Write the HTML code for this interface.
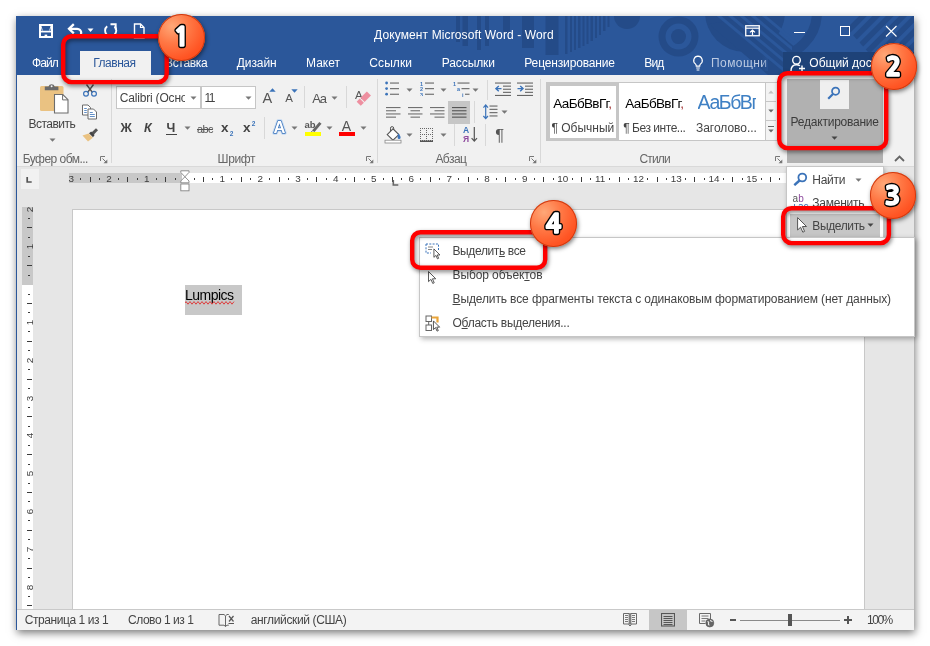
<!DOCTYPE html>
<html lang="ru">
<head>
<meta charset="utf-8">
<title>Документ Microsoft Word - Word</title>
<style>
html,body{margin:0;padding:0;}
body{width:930px;height:646px;position:relative;overflow:hidden;background:#fff;font-family:"Liberation Sans",sans-serif;font-size:12px;}
#all{position:absolute;left:0;top:0;width:930px;height:646px;will-change:transform;}
.r{position:absolute;display:block;}
.t{position:absolute;white-space:pre;line-height:1;display:block;}
.badge{border-radius:50%;background:radial-gradient(circle at 30% 26%,#ffa878 0%,#ff7845 36%,#ff5524 70%,#fb4310 100%);box-shadow:0 0 0 1px #cf3a10 inset,1px 2px 4px rgba(0,0,0,.5);}
u{text-decoration:underline;text-underline-offset:1px;}
</style>
</head>
<body>
<div id="all">
<!-- window -->
<div class="r" style="left:16px;top:16px;width:898px;height:614px;background:#e6e6e6;box-shadow:1px 3px 8px rgba(0,0,0,.52);"></div>
<div class="r" style="left:16px;top:16px;width:898px;height:59px;background:#2b579a;"></div>
<svg class="r" style="left:16px;top:16px;" width="898" height="59" viewBox="0 0 898 59"><g fill="#244b88"><rect x="440" y="0" width="4" height="26"/><rect x="446.5" y="0" width="5.5" height="30"/><rect x="461" y="0" width="4" height="34"/><rect x="469" y="0" width="4" height="30"/><rect x="487" y="0" width="7" height="17"/><rect x="506" y="0" width="12" height="32"/><rect x="529.5" y="0" width="13" height="39"/><rect x="549" y="0" width="2.5" height="38"/><rect x="554" y="0" width="2" height="36"/><rect x="558" y="0" width="2" height="34"/><rect x="562" y="0" width="2.5" height="32"/><rect x="566.5" y="0" width="2" height="30"/><rect x="570.5" y="0" width="2" height="28"/><rect x="574.5" y="0" width="2.5" height="25"/><rect x="579" y="0" width="2" height="22"/><rect x="583" y="0" width="2" height="19"/><rect x="587" y="0" width="2.5" height="15"/><rect x="591.5" y="0" width="2" height="11"/><circle cx="611" cy="0" r="13"/><path d="M662.5 0.6 m-20 20 a20 20 0 1 0 40 0 a20 20 0 1 0 -40 0 M662.5 20.6 m-13 0 a13 13 0 1 1 26 0 a13 13 0 1 1 -26 0" fill-rule="evenodd"/><circle cx="662.5" cy="20.6" r="7.5"/><circle cx="729" cy="-4" r="40"/><path d="M693 8 L752 59 L806 59 L806 54 L742 0 Z"/></g><g stroke="#2b579a" stroke-width="3"><path d="M697.0 -5L787.0 70"/><path d="M708.3 -5L798.3 70"/><path d="M719.6 -5L809.6 70"/><path d="M730.9 -5L820.9 70"/><path d="M742.2 -5L832.2 70"/></g><clipPath id="cpA"><path d="M776 0H898V59H776Z"/></clipPath><circle cx="756" cy="-4" r="45" fill="none" stroke="#244b88" stroke-width="10" clip-path="url(#cpA)"/><clipPath id="cpR"><path d="M820 0H898V36H852Z"/></clipPath><g clip-path="url(#cpR)" stroke="#244b88" stroke-width="5.5"><path d="M797.0 50L857.0 -10"/><path d="M810.4 50L870.4 -10"/><path d="M823.8 50L883.8 -10"/><path d="M837.2 50L897.2 -10"/><path d="M850.6 50L910.6 -10"/><path d="M864.0 50L924.0 -10"/><path d="M877.4 50L937.4 -10"/><path d="M890.8 50L950.8 -10"/><path d="M904.2 50L964.2 -10"/><path d="M917.6 50L977.6 -10"/></g></svg>
<div class="r" style="left:16px;top:75px;width:1px;height:555px;background:#2b579a;"></div>
<svg class="r" style="left:38px;top:23px;" width="16" height="16" viewBox="0 0 16 16"><path d="M2 2h12v12h-12z" fill="none" stroke="#fff" stroke-width="2"/><path d="M2 8.600h12" stroke="#fff" stroke-width="1.700"/><path d="M3 3l1.300 4.500M13 3l-1.300 4.500" stroke="#fff" stroke-width="0.900"/><rect x="6.600" y="11.600" width="2.600" height="3" fill="#fff"/></svg>
<svg class="r" style="left:67px;top:22px;" width="18" height="17" viewBox="0 0 18 17"><path d="M2.500 6.800h7.700a4 4 0 0 1 0 8H8.500" fill="none" stroke="#fff" stroke-width="2.300"/><path d="M6.800 2.200L2 6.800l4.800 4.600" fill="none" stroke="#fff" stroke-width="2.300"/></svg>
<svg class="r" style="left:87px;top:28px;" width="7" height="5" viewBox="0 0 7 5"><path d="M0.5 0.5h6L3.5 4z" fill="#fff"/></svg>
<svg class="r" style="left:102px;top:22px;" width="17" height="17" viewBox="0 0 17 17"><path d="M5.2 4.2 A5.6 5.6 0 1 0 12.5 4.5" fill="none" stroke="#fff" stroke-width="1.9"/><path d="M8.5 2.2h5.2v5.2" fill="none" stroke="#fff" stroke-width="1.9"/></svg>
<svg class="r" style="left:133px;top:23px;" width="12" height="16" viewBox="0 0 12 16"><path d="M1.5 1h6l3.5 3.5V15h-9.5z" fill="none" stroke="#fff" stroke-width="1.4"/><path d="M7.5 1v3.5H11" fill="none" stroke="#fff" stroke-width="1.2"/></svg>
<span class="t" style='left:374.0px;top:28.8px;font-size:12px;color:#fff;letter-spacing:0.12px;'>Документ Microsoft Word - Word</span>
<svg class="r" style="left:745px;top:25px;" width="15" height="12" viewBox="0 0 15 12"><rect x="0.75" y="0.75" width="13.5" height="10" fill="none" stroke="#fff" stroke-width="1.3"/><path d="M0.75 3.2h13.5" stroke="#fff" stroke-width="1.2"/><path d="M7.5 10V5.2M5 7.4l2.5-2.4 2.5 2.4" fill="none" stroke="#fff" stroke-width="1.2"/></svg>
<div class="r" style="left:794px;top:32px;width:11px;height:1px;background:#fff;"></div>
<div class="r" style="left:840px;top:26px;width:10px;height:10px;background:transparent;border:1px solid #fff;box-sizing:border-box;"></div>
<svg class="r" style="left:885px;top:25px;" width="13" height="13" viewBox="0 0 13 13"><path d="M1 1l10.5 10.5M11.5 1L1 11.5" stroke="#fff" stroke-width="1.1"/></svg>
<!-- tabs -->
<span class="t" style='left:32.0px;top:56.8px;font-size:12px;color:#fff;letter-spacing:-0.94px;'>Файл</span>
<div class="r" style="left:80px;top:51px;width:71px;height:24px;background:#f1f1f1;"></div>
<span class="t" style='left:93.3px;top:56.8px;font-size:12px;color:#2b579a;letter-spacing:-0.50px;'>Главная</span>
<span class="t" style='left:165.0px;top:56.8px;font-size:12px;color:#fff;letter-spacing:-0.32px;'>Вставка</span>
<span class="t" style='left:236.7px;top:56.8px;font-size:12px;color:#fff;letter-spacing:-0.07px;'>Дизайн</span>
<span class="t" style='left:306.0px;top:56.8px;font-size:12px;color:#fff;letter-spacing:0.01px;'>Макет</span>
<span class="t" style='left:369.3px;top:56.8px;font-size:12px;color:#fff;letter-spacing:0.09px;'>Ссылки</span>
<span class="t" style='left:441.7px;top:56.8px;font-size:12px;color:#fff;letter-spacing:-0.08px;'>Рассылки</span>
<span class="t" style='left:524.3px;top:56.8px;font-size:12px;color:#fff;letter-spacing:-0.15px;'>Рецензирование</span>
<span class="t" style='left:644.3px;top:56.8px;font-size:12px;color:#fff;letter-spacing:-0.86px;'>Вид</span>
<svg class="r" style="left:692px;top:55px;" width="12" height="17" viewBox="0 0 12 17"><path d="M6 1.2a4.3 4.3 0 0 0-2.6 7.7c.6.6.9 1.3.9 2.3h3.4c0-1 .3-1.7.9-2.3A4.3 4.3 0 0 0 6 1.2z" fill="none" stroke="#fff" stroke-width="1.2"/><path d="M4.2 13h3.6M4.6 15h2.8" stroke="#fff" stroke-width="1.1"/></svg>
<span class="t" style='left:711.0px;top:56.8px;font-size:12px;color:#bccae2;letter-spacing:0.43px;width:56.2px;overflow:hidden;'>Помощник</span>
<div class="r" style="left:762px;top:55px;width:6px;height:16px;background:linear-gradient(90deg,rgba(43,87,154,0),rgba(43,87,154,.55));"></div>
<div class="r" style="left:783px;top:52px;width:131px;height:23px;background:#1e4278;"></div>
<svg class="r" style="left:790px;top:55px;" width="16" height="17" viewBox="0 0 16 17"><circle cx="6.5" cy="5.2" r="3.8" fill="none" stroke="#fff" stroke-width="1.4"/><path d="M1 16c0-4 2-6.3 5.5-6.3 1.4 0 2.5.4 3.4 1.1" fill="none" stroke="#fff" stroke-width="1.4"/><path d="M12 10.5v6M9 13.5h6" stroke="#fff" stroke-width="1.4"/></svg>
<span class="t" style='left:809.3px;top:56.8px;font-size:12px;color:#fff;width:104px;overflow:hidden;'>Общий доступ</span>
<!-- ribbon -->
<div class="r" style="left:17px;top:75px;width:897px;height:92px;background:#f1f1f1;"></div>
<div class="r" style="left:17px;top:166px;width:897px;height:1px;background:#d9d9d9;"></div>
<!-- clipboard group -->
<svg class="r" style="left:39px;top:82px;" width="31" height="32" viewBox="0 0 31 32"><rect x="1" y="4" width="23.5" height="25" rx="1.5" fill="#eac282"/><path d="M5.800 8.300V4.600h3.700a3.200 3.200 0 0 1 6.200 0h3.700v3.700z" fill="#6a6a6a"/><circle cx="12.600" cy="4.300" r="1" fill="#f3f3f3"/><path d="M15.5 12.5h8.3l5.2 5.2V31h-13.5z" fill="#fff" stroke="#6d6d6d" stroke-width="1.1"/><path d="M23.6 12.7v5.2H29" fill="none" stroke="#6d6d6d" stroke-width="1"/></svg>
<span class="t" style='left:28.6px;top:117.8px;font-size:12px;color:#444444;letter-spacing:-0.53px;'>Вставить</span>
<svg class="r" style="left:48.9px;top:137.8px;" width="7" height="4" viewBox="0 0 7 4"><path d="M0.5 0.5h6L3.5 3.7z" fill="#777"/></svg>
<svg class="r" style="left:82px;top:84px;" width="16" height="13" viewBox="0 0 16 13"><path d="M4.5 0.5L10.5 8.5M11.5 0.5L5.5 8.5" stroke="#555" stroke-width="1.4" fill="none"/><circle cx="4" cy="9.8" r="2.4" fill="none" stroke="#3b73b9" stroke-width="1.2"/><circle cx="12" cy="9.8" r="2.4" fill="none" stroke="#3b73b9" stroke-width="1.2"/></svg>
<svg class="r" style="left:81px;top:104px;" width="17" height="16" viewBox="0 0 17 16"><path d="M1.500 1h5.500l2.500 2.500V11h-8z" fill="#fff" stroke="#6a6a6a" stroke-width="1"/><path d="M3.200 4.500h2.600M3.200 6.500h2.600M3.200 8.500h2.600" stroke="#3b73b9" stroke-width="0.800"/><path d="M7 5h5.500l3 3V15H7z" fill="#fff" stroke="#6a6a6a" stroke-width="1"/><path d="M8.800 8.500h3M8.800 10.500h5M8.800 12.500h5" stroke="#3b73b9" stroke-width="0.800"/></svg>
<svg class="r" style="left:81px;top:127px;" width="18" height="15" viewBox="0 0 18 15"><path d="M10.5 5.5L15 1.2l2 2-4.3 4.5z" fill="#555"/><path d="M8 6.2l2.2-1.6 3.4 3.4-1.6 2.2z" fill="#444"/><path d="M7.6 6.6l4.2 4.2L7 14.5 1.5 8.4z" fill="#eac282"/></svg>
<span class="t" style='left:22.7px;top:153.1px;font-size:12px;color:#666;letter-spacing:-0.53px;'>Буфер обм...</span>
<svg class="r" style="left:100px;top:156px;" width="8" height="8" viewBox="0 0 8 8"><path d="M0.5 5V0.5H5" fill="none" stroke="#777" stroke-width="1"/><path d="M2.5 2.5L6.5 6.5" stroke="#777" stroke-width="1"/><path d="M7.3 3.5v3.8H3.5z" fill="#777"/></svg>
<div class="r" style="left:111px;top:79px;width:1px;height:84px;background:#d8d8d8;"></div>
<!-- font group -->
<div class="r" style="left:116px;top:86px;width:85px;height:23px;background:#fff;border:1px solid #c6c6c6;box-sizing:border-box;"></div>
<span class="t" style='left:119.8px;top:91.6px;font-size:12px;color:#444444;letter-spacing:-0.19px;width:65.5px;overflow:hidden;'>Calibri (Основной текст)</span>
<svg class="r" style="left:190.0px;top:95.8px;" width="7" height="4" viewBox="0 0 7 4"><path d="M0.5 0.5h6L3.5 3.7z" fill="#777"/></svg>
<div class="r" style="left:201px;top:86px;width:55px;height:23px;background:#fff;border:1px solid #c6c6c6;box-sizing:border-box;"></div>
<span class="t" style='left:204.5px;top:91.6px;font-size:12px;color:#444444;letter-spacing:-1.47px;'>11</span>
<svg class="r" style="left:244.8px;top:95.8px;" width="7" height="4" viewBox="0 0 7 4"><path d="M0.5 0.5h6L3.5 3.7z" fill="#777"/></svg>
<span class="t" style='left:262.6px;top:90.7px;font-size:14.5px;color:#555;'>A</span>
<svg class="r" style="left:269px;top:88px;" width="7" height="4" viewBox="0 0 7 4"><path d="M0.3 3.8L3.5 0.3 6.7 3.8z" fill="#3b73b9"/></svg>
<span class="t" style='left:285.3px;top:93.3px;font-size:11.5px;color:#555;'>A</span>
<svg class="r" style="left:291px;top:89px;" width="7" height="4" viewBox="0 0 7 4"><path d="M0.3 0.2h6.4L3.5 3.7z" fill="#3b73b9"/></svg>
<div class="r" style="left:304px;top:86px;width:1px;height:22px;background:#d8d8d8;"></div>
<span class="t" style='left:312.3px;top:92.0px;font-size:13px;color:#555;letter-spacing:-1.21px;'>Aa</span>
<svg class="r" style="left:331.0px;top:95.8px;" width="7" height="4" viewBox="0 0 7 4"><path d="M0.5 0.5h6L3.5 3.7z" fill="#777"/></svg>
<div class="r" style="left:346px;top:86px;width:1px;height:22px;background:#d8d8d8;"></div>
<svg class="r" style="left:354px;top:88px;" width="18" height="18" viewBox="0 0 18 18"><text x="1" y="10.800" font-family="Liberation Sans, sans-serif" font-size="11.500" fill="#555">A</text><g transform="translate(9.800,10.600) rotate(-45)" fill="#ee8fa0"><rect x="-7.200" y="-2.900" width="4.400" height="5.800"/><rect x="-1.800" y="-2.900" width="9" height="5.800"/></g></svg>
<span class="t" style='left:120.5px;top:122.2px;font-size:12.5px;color:#444;font-weight:700;'>Ж</span>
<span class="t" style='left:144.0px;top:122.2px;font-size:12.5px;color:#444;font-weight:700;font-style:italic;'>К</span>
<span class="t" style='left:166.5px;top:122.2px;font-size:12.5px;color:#444;font-weight:700;'>Ч</span>
<div class="r" style="left:166px;top:133.6px;width:10.5px;height:1px;background:#444;"></div>
<svg class="r" style="left:184.0px;top:126.2px;" width="7" height="4" viewBox="0 0 7 4"><path d="M0.5 0.5h6L3.5 3.7z" fill="#777"/></svg>
<span class="t" style='left:197.0px;top:123.5px;font-size:11px;color:#555;letter-spacing:-0.62px;text-decoration:line-through;'>abc</span>
<span class="t" style='left:221.0px;top:121.4px;font-size:13.5px;color:#444;font-weight:700;'>x</span>
<span class="t" style='left:229.8px;top:130.7px;font-size:6.5px;color:#3b73b9;font-weight:700;'>2</span>
<span class="t" style='left:243.0px;top:121.4px;font-size:13.5px;color:#444;font-weight:700;'>x</span>
<span class="t" style='left:251.8px;top:121.1px;font-size:6.5px;color:#3b73b9;font-weight:700;'>2</span>
<div class="r" style="left:264px;top:117px;width:1px;height:22px;background:#d8d8d8;"></div>
<svg class="r" style="left:270px;top:117px;" width="20" height="20" viewBox="0 0 20 20"><text x="3.600" y="16.400" font-family="Liberation Sans, sans-serif" font-size="16.500" font-weight="700" fill="#fff" stroke="#c3d9f2" stroke-width="3.400" stroke-linejoin="round">A</text><text x="3.600" y="16.400" font-family="Liberation Sans, sans-serif" font-size="16.500" font-weight="700" fill="#fff" stroke="#3b73b9" stroke-width="1.500" stroke-linejoin="round" paint-order="stroke">A</text></svg>
<svg class="r" style="left:291.0px;top:126.2px;" width="7" height="4" viewBox="0 0 7 4"><path d="M0.5 0.5h6L3.5 3.7z" fill="#777"/></svg>
<svg class="r" style="left:304px;top:119px;" width="19" height="18" viewBox="0 0 19 18"><text x="0.5" y="9" font-family="Liberation Sans, sans-serif" font-size="9.5" font-weight="700" fill="#555">ab</text><path d="M8 11.5L15.3 3l2.2 1.8L10.5 13z" fill="#666"/><path d="M7.3 12l2.6 1.6-3.6 1z" fill="#666"/><rect x="1" y="13" width="16" height="4" fill="#ffff00"/></svg>
<svg class="r" style="left:326.0px;top:126.2px;" width="7" height="4" viewBox="0 0 7 4"><path d="M0.5 0.5h6L3.5 3.7z" fill="#777"/></svg>
<span class="t" style='left:341.7px;top:119.1px;font-size:14px;color:#555;'>A</span>
<div class="r" style="left:339px;top:132px;width:16px;height:4px;background:#f00;"></div>
<svg class="r" style="left:360.0px;top:126.2px;" width="7" height="4" viewBox="0 0 7 4"><path d="M0.5 0.5h6L3.5 3.7z" fill="#777"/></svg>
<span class="t" style='left:217.6px;top:153.1px;font-size:12px;color:#666;letter-spacing:-0.40px;'>Шрифт</span>
<svg class="r" style="left:366px;top:156px;" width="8" height="8" viewBox="0 0 8 8"><path d="M0.5 5V0.5H5" fill="none" stroke="#777" stroke-width="1"/><path d="M2.5 2.5L6.5 6.5" stroke="#777" stroke-width="1"/><path d="M7.3 3.5v3.8H3.5z" fill="#777"/></svg>
<div class="r" style="left:377px;top:79px;width:1px;height:84px;background:#d8d8d8;"></div>
<!-- paragraph group -->
<svg class="r" style="left:385px;top:81px;" width="15" height="15" viewBox="0 0 15 15"><circle cx="1.6" cy="2.0" r="1.4" fill="#3b73b9"/><rect x="5" y="1.5" width="9" height="1.1" fill="#666"/><circle cx="1.6" cy="7.6" r="1.4" fill="#3b73b9"/><rect x="5" y="7.1" width="9" height="1.1" fill="#666"/><circle cx="1.6" cy="13.2" r="1.4" fill="#3b73b9"/><rect x="5" y="12.7" width="9" height="1.1" fill="#666"/></svg>
<svg class="r" style="left:406.0px;top:87.8px;" width="7" height="4" viewBox="0 0 7 4"><path d="M0.5 0.5h6L3.5 3.7z" fill="#777"/></svg>
<svg class="r" style="left:419.5px;top:81px;" width="15" height="15" viewBox="0 0 15 15"><text x="0" y="4.6" font-family="Liberation Sans, sans-serif" font-size="5.5" font-weight="700" fill="#3b73b9">1</text><rect x="5" y="1.5" width="9" height="1.1" fill="#666"/><text x="0" y="10.2" font-family="Liberation Sans, sans-serif" font-size="5.5" font-weight="700" fill="#3b73b9">2</text><rect x="5" y="7.1" width="9" height="1.1" fill="#666"/><text x="0" y="15.8" font-family="Liberation Sans, sans-serif" font-size="5.5" font-weight="700" fill="#3b73b9">3</text><rect x="5" y="12.7" width="9" height="1.1" fill="#666"/></svg>
<svg class="r" style="left:440.0px;top:87.8px;" width="7" height="4" viewBox="0 0 7 4"><path d="M0.5 0.5h6L3.5 3.7z" fill="#777"/></svg>
<svg class="r" style="left:452.5px;top:81px;" width="17" height="16" viewBox="0 0 17 16"><text x="0" y="4.6" font-family="Liberation Sans, sans-serif" font-size="5.5" font-weight="700" fill="#3b73b9">1</text><rect x="4.5" y="1.5" width="12" height="1.1" fill="#666"/><text x="4" y="10.2" font-family="Liberation Sans, sans-serif" font-size="5.5" font-weight="700" fill="#3b73b9">a</text><rect x="8.5" y="7.1" width="8" height="1.1" fill="#666"/><text x="9" y="15.8" font-family="Liberation Sans, sans-serif" font-size="5.5" font-weight="700" fill="#3b73b9">i</text><rect x="12" y="12.7" width="4.5" height="1.1" fill="#666"/></svg>
<svg class="r" style="left:472.0px;top:87.8px;" width="7" height="4" viewBox="0 0 7 4"><path d="M0.5 0.5h6L3.5 3.7z" fill="#777"/></svg>
<div class="r" style="left:487px;top:80px;width:1px;height:20px;background:#d8d8d8;"></div>
<svg class="r" style="left:495px;top:82px;" width="17" height="14" viewBox="0 0 17 14"><rect x="0" y="0.5" width="16" height="1.1" fill="#666"/><rect x="8" y="3.6" width="8" height="1.1" fill="#666"/><rect x="8" y="6.7" width="8" height="1.1" fill="#666"/><rect x="8" y="9.8" width="8" height="1.1" fill="#666"/><rect x="0" y="12.9" width="16" height="1.1" fill="#666"/><path d="M6.5 6.6H1.5M3.8 4L1 6.6l2.8 2.6" fill="none" stroke="#3b73b9" stroke-width="1.4"/></svg>
<svg class="r" style="left:517px;top:82px;" width="17" height="14" viewBox="0 0 17 14"><rect x="0" y="0.5" width="16" height="1.1" fill="#666"/><rect x="8" y="3.6" width="8" height="1.1" fill="#666"/><rect x="8" y="6.7" width="8" height="1.1" fill="#666"/><rect x="8" y="9.8" width="8" height="1.1" fill="#666"/><rect x="0" y="12.9" width="16" height="1.1" fill="#666"/><path d="M0.5 6.6h5M3.2 4L6 6.6 3.2 9.2" fill="none" stroke="#3b73b9" stroke-width="1.4"/></svg>
<svg class="r" style="left:385.5px;top:106.5px;" width="15" height="11" viewBox="0 0 15 11"><rect x="0" y="0.0" width="14.5" height="1.1" fill="#707070"/><rect x="0" y="3.2" width="10" height="1.1" fill="#707070"/><rect x="0" y="6.4" width="14.5" height="1.1" fill="#707070"/><rect x="0" y="9.6" width="10" height="1.1" fill="#707070"/></svg>
<svg class="r" style="left:408px;top:106.5px;" width="15" height="11" viewBox="0 0 15 11"><rect x="0" y="0.0" width="14.5" height="1.1" fill="#707070"/><rect x="2.5" y="3.2" width="9.5" height="1.1" fill="#707070"/><rect x="0" y="6.4" width="14.5" height="1.1" fill="#707070"/><rect x="2.5" y="9.6" width="9.5" height="1.1" fill="#707070"/></svg>
<svg class="r" style="left:430px;top:106.5px;" width="15" height="11" viewBox="0 0 15 11"><rect x="0" y="0.0" width="14.5" height="1.1" fill="#707070"/><rect x="4.5" y="3.2" width="10" height="1.1" fill="#707070"/><rect x="0" y="6.4" width="14.5" height="1.1" fill="#707070"/><rect x="4.5" y="9.6" width="10" height="1.1" fill="#707070"/></svg>
<div class="r" style="left:448px;top:101px;width:22px;height:23px;background:#c6c6c6;"></div>
<svg class="r" style="left:452px;top:106.5px;" width="15" height="11" viewBox="0 0 15 11"><rect x="0" y="0.0" width="14.5" height="1.1" fill="#555"/><rect x="0" y="3.2" width="14.5" height="1.1" fill="#555"/><rect x="0" y="6.4" width="14.5" height="1.1" fill="#555"/><rect x="0" y="9.6" width="14.5" height="1.1" fill="#555"/></svg>
<div class="r" style="left:474px;top:101px;width:1px;height:22px;background:#d8d8d8;"></div>
<svg class="r" style="left:483px;top:104px;" width="15" height="16" viewBox="0 0 15 16"><rect x="6.5" y="1.5" width="8" height="1.1" fill="#666"/><rect x="6.5" y="4.8" width="8" height="1.1" fill="#666"/><rect x="6.5" y="8.1" width="8" height="1.1" fill="#666"/><rect x="6.5" y="11.4" width="8" height="1.1" fill="#666"/><path d="M2.7 1v13.5M0.4 3.6L2.7 1 5 3.6M0.4 12L2.7 14.6 5 12" fill="none" stroke="#3b73b9" stroke-width="1.2"/></svg>
<svg class="r" style="left:501.0px;top:110.2px;" width="7" height="4" viewBox="0 0 7 4"><path d="M0.5 0.5h6L3.5 3.7z" fill="#777"/></svg>
<svg class="r" style="left:384px;top:126px;" width="19" height="18" viewBox="0 0 19 18"><path d="M3.2 8.6L9 2.8l5.8 5.8L9 14.2z" fill="#fff" stroke="#555" stroke-width="1.1"/><path d="M6.5 5.5V2.2a1.6 1.6 0 0 1 3.2 0V4" fill="none" stroke="#555" stroke-width="1"/><path d="M14 7.2c1.8 1.6 2.6 3 2.6 4.2a1.5 1.5 0 0 1-3 0c0-1 .3-2 .4-4.2z" fill="#3b73b9"/><rect x="1" y="14.2" width="16" height="2.8" fill="#fff" stroke="#888" stroke-width="0.8"/></svg>
<svg class="r" style="left:406.0px;top:133.2px;" width="7" height="4" viewBox="0 0 7 4"><path d="M0.5 0.5h6L3.5 3.7z" fill="#777"/></svg>
<svg class="r" style="left:420px;top:128px;" width="14" height="14" viewBox="0 0 14 14"><path d="M0 0.5H13" stroke="#666" stroke-width="1" stroke-dasharray="1 1"/><path d="M0.5 0V13" stroke="#666" stroke-width="1" stroke-dasharray="1 1"/><path d="M0 6.5H13" stroke="#666" stroke-width="1" stroke-dasharray="1 1"/><path d="M6.5 0V13" stroke="#666" stroke-width="1" stroke-dasharray="1 1"/><path d="M0 12.5H13" stroke="#666" stroke-width="1" stroke-dasharray="1 1"/><path d="M12.5 0V13" stroke="#666" stroke-width="1" stroke-dasharray="1 1"/><rect x="0" y="12.500" width="13" height="1.500" fill="#555"/></svg>
<svg class="r" style="left:440.0px;top:133.2px;" width="7" height="4" viewBox="0 0 7 4"><path d="M0.5 0.5h6L3.5 3.7z" fill="#777"/></svg>
<div class="r" style="left:454px;top:124px;width:1px;height:22px;background:#d8d8d8;"></div>
<svg class="r" style="left:463px;top:126px;" width="16" height="18" viewBox="0 0 16 18"><text x="0" y="7.4" font-family="Liberation Sans, sans-serif" font-size="8.5" font-weight="700" fill="#3b73b9">A</text><text x="0" y="16" font-family="Liberation Sans, sans-serif" font-size="8.5" font-weight="700" fill="#8e4a9e">Я</text><path d="M11.3 1v14M8.6 12.2l2.7 3 2.7-3" fill="none" stroke="#555" stroke-width="1.2"/></svg>
<div class="r" style="left:485px;top:124px;width:1px;height:22px;background:#d8d8d8;"></div>
<span class="t" style='left:495.2px;top:126.5px;font-size:16.5px;color:#555;'>¶</span>
<span class="t" style='left:435.4px;top:153.1px;font-size:12px;color:#666;letter-spacing:-0.54px;'>Абзац</span>
<svg class="r" style="left:529px;top:156px;" width="8" height="8" viewBox="0 0 8 8"><path d="M0.5 5V0.5H5" fill="none" stroke="#777" stroke-width="1"/><path d="M2.5 2.5L6.5 6.5" stroke="#777" stroke-width="1"/><path d="M7.3 3.5v3.8H3.5z" fill="#777"/></svg>
<div class="r" style="left:540px;top:79px;width:1px;height:84px;background:#d8d8d8;"></div>
<!-- styles group -->
<div class="r" style="left:546px;top:82px;width:231px;height:59px;background:#fff;border:1px solid #c6c6c6;box-sizing:border-box;"></div>
<div class="r" style="left:547px;top:83px;width:72px;height:58px;background:#fff;border:3px solid #c6c6c6;box-sizing:border-box;"></div>
<span class="t" style='left:553.3px;top:97.0px;font-size:13.5px;color:#000;letter-spacing:-0.64px;'>АаБбВвГг<span style="color:#a03030">,</span></span>
<span class="t" style='left:551.4px;top:121.5px;font-size:12px;color:#444444;letter-spacing:0.01px;'>¶ Обычный</span>
<span class="t" style='left:625.3px;top:97.0px;font-size:13.5px;color:#000;letter-spacing:-0.64px;'>АаБбВвГг<span style="color:#a03030">,</span></span>
<span class="t" style='left:623.2px;top:121.5px;font-size:12px;color:#444444;letter-spacing:-0.46px;'>¶ Без инте...</span>
<span class="t" style='left:697.6px;top:93.0px;font-size:19.5px;color:#3f80c4;letter-spacing:-1.44px;width:58.6px;overflow:hidden;'>АаБбВг</span>
<span class="t" style='left:696.0px;top:121.5px;font-size:12px;color:#444444;letter-spacing:-0.03px;'>Заголово...</span>
<div class="r" style="left:765px;top:83px;width:11px;height:57px;background:#f3f3f3;border-left:1px solid #c6c6c6;"></div>
<div class="r" style="left:765px;top:101px;width:11px;height:1px;background:#c6c6c6;"></div>
<div class="r" style="left:765px;top:120px;width:11px;height:1px;background:#c6c6c6;"></div>
<svg class="r" style="left:768px;top:90px;" width="6" height="4" viewBox="0 0 6 4"><path d="M0.3 3.6L3 0.4 5.7 3.6z" fill="#c0c0c0"/></svg>
<svg class="r" style="left:768px;top:109px;" width="6" height="4" viewBox="0 0 6 4"><path d="M0.3 0.4h5.4L3 3.6z" fill="#666"/></svg>
<svg class="r" style="left:768px;top:126px;" width="6" height="8" viewBox="0 0 6 8"><path d="M0 0.5h6" stroke="#666" stroke-width="1"/><path d="M0.3 3.4h5.4L3 6.6z" fill="#666"/></svg>
<span class="t" style='left:639.4px;top:153.1px;font-size:12px;color:#666;letter-spacing:-0.82px;'>Стили</span>
<svg class="r" style="left:775px;top:156px;" width="8" height="8" viewBox="0 0 8 8"><path d="M0.5 5V0.5H5" fill="none" stroke="#777" stroke-width="1"/><path d="M2.5 2.5L6.5 6.5" stroke="#777" stroke-width="1"/><path d="M7.3 3.5v3.8H3.5z" fill="#777"/></svg>
<!-- editing group -->
<div class="r" style="left:786.5px;top:79px;width:96px;height:83.5px;background:#b1b1b1;"></div>
<div class="r" style="left:819.5px;top:79.5px;width:29px;height:29px;background:#efefef;"></div>
<svg class="r" style="left:827px;top:86px;" width="14" height="14" viewBox="0 0 14 14"><circle cx="8.6" cy="5.2" r="3.6" fill="none" stroke="#3b73b9" stroke-width="1.7"/><path d="M6 8L1.2 12.8" stroke="#3b73b9" stroke-width="2.2"/></svg>
<span class="t" style='left:790.6px;top:116.2px;font-size:12px;color:#3b3b3b;letter-spacing:-0.23px;'>Редактирование</span>
<svg class="r" style="left:830.5px;top:135.6px;" width="7" height="4" viewBox="0 0 7 4"><path d="M0.5 0.5h6L3.5 3.7z" fill="#444"/></svg>
<svg class="r" style="left:894px;top:155px;" width="11" height="7" viewBox="0 0 11 7"><path d="M1 6L5.5 1.5 10 6" fill="none" stroke="#666" stroke-width="1.8"/></svg>
<!-- rulers and page -->
<div class="r" style="left:21px;top:169px;width:18px;height:20px;background:#f1f1f1;"></div>
<svg class="r" style="left:26px;top:176px;" width="7" height="8" viewBox="0 0 7 8"><path d="M1.200 1V6H5.700" fill="none" stroke="#555" stroke-width="1.700"/></svg>
<div class="r" style="left:69px;top:173px;width:113px;height:10px;background:#c8c8c8;"></div>
<div class="r" style="left:182px;top:173px;width:604px;height:10px;background:#fff;"></div>
<span class="t" style='left:68.5px;top:173.6px;font-size:9.9px;color:#3c3c3c;'>3</span>
<span class="t" style='left:106.2px;top:173.6px;font-size:9.9px;color:#3c3c3c;'>2</span>
<span class="t" style='left:144.1px;top:173.6px;font-size:9.9px;color:#3c3c3c;'>1</span>
<span class="t" style='left:219.6px;top:173.6px;font-size:9.9px;color:#3c3c3c;'>1</span>
<span class="t" style='left:257.4px;top:173.6px;font-size:9.9px;color:#3c3c3c;'>2</span>
<span class="t" style='left:295.2px;top:173.6px;font-size:9.9px;color:#3c3c3c;'>3</span>
<span class="t" style='left:333.0px;top:173.6px;font-size:9.9px;color:#3c3c3c;'>4</span>
<span class="t" style='left:370.9px;top:173.6px;font-size:9.9px;color:#3c3c3c;'>5</span>
<span class="t" style='left:408.6px;top:173.6px;font-size:9.9px;color:#3c3c3c;'>6</span>
<span class="t" style='left:446.4px;top:173.6px;font-size:9.9px;color:#3c3c3c;'>7</span>
<span class="t" style='left:484.2px;top:173.6px;font-size:9.9px;color:#3c3c3c;'>8</span>
<span class="t" style='left:522.0px;top:173.6px;font-size:9.9px;color:#3c3c3c;'>9</span>
<span class="t" style='left:557.3px;top:173.6px;font-size:9.9px;color:#3c3c3c;'>10</span>
<span class="t" style='left:595.1px;top:173.6px;font-size:9.9px;color:#3c3c3c;'>11</span>
<span class="t" style='left:632.9px;top:173.6px;font-size:9.9px;color:#3c3c3c;'>12</span>
<span class="t" style='left:670.7px;top:173.6px;font-size:9.9px;color:#3c3c3c;'>13</span>
<span class="t" style='left:708.5px;top:173.6px;font-size:9.9px;color:#3c3c3c;'>14</span>
<span class="t" style='left:746.3px;top:173.6px;font-size:9.9px;color:#3c3c3c;'>15</span>
<svg class="r" style="left:0px;top:173px;" width="786" height="10" viewBox="0 0 786 10"><rect x="80" y="5" width="1" height="2" fill="#3c3c3c"/><rect x="90" y="4" width="1" height="5" fill="#3c3c3c"/><rect x="99" y="5" width="1" height="2" fill="#3c3c3c"/><rect x="118" y="5" width="1" height="2" fill="#3c3c3c"/><rect x="127" y="4" width="1" height="5" fill="#3c3c3c"/><rect x="137" y="5" width="1" height="2" fill="#3c3c3c"/><rect x="156" y="5" width="1" height="2" fill="#3c3c3c"/><rect x="165" y="4" width="1" height="5" fill="#3c3c3c"/><rect x="175" y="5" width="1" height="2" fill="#3c3c3c"/><rect x="194" y="5" width="1" height="2" fill="#3c3c3c"/><rect x="203" y="4" width="1" height="5" fill="#3c3c3c"/><rect x="212" y="5" width="1" height="2" fill="#3c3c3c"/><rect x="231" y="5" width="1" height="2" fill="#3c3c3c"/><rect x="241" y="4" width="1" height="5" fill="#3c3c3c"/><rect x="250" y="5" width="1" height="2" fill="#3c3c3c"/><rect x="269" y="5" width="1" height="2" fill="#3c3c3c"/><rect x="279" y="4" width="1" height="5" fill="#3c3c3c"/><rect x="288" y="5" width="1" height="2" fill="#3c3c3c"/><rect x="307" y="5" width="1" height="2" fill="#3c3c3c"/><rect x="316" y="4" width="1" height="5" fill="#3c3c3c"/><rect x="326" y="5" width="1" height="2" fill="#3c3c3c"/><rect x="345" y="5" width="1" height="2" fill="#3c3c3c"/><rect x="354" y="4" width="1" height="5" fill="#3c3c3c"/><rect x="364" y="5" width="1" height="2" fill="#3c3c3c"/><rect x="383" y="5" width="1" height="2" fill="#3c3c3c"/><rect x="392" y="4" width="1" height="5" fill="#3c3c3c"/><rect x="401" y="5" width="1" height="2" fill="#3c3c3c"/><rect x="420" y="5" width="1" height="2" fill="#3c3c3c"/><rect x="430" y="4" width="1" height="5" fill="#3c3c3c"/><rect x="439" y="5" width="1" height="2" fill="#3c3c3c"/><rect x="458" y="5" width="1" height="2" fill="#3c3c3c"/><rect x="468" y="4" width="1" height="5" fill="#3c3c3c"/><rect x="477" y="5" width="1" height="2" fill="#3c3c3c"/><rect x="496" y="5" width="1" height="2" fill="#3c3c3c"/><rect x="505" y="4" width="1" height="5" fill="#3c3c3c"/><rect x="515" y="5" width="1" height="2" fill="#3c3c3c"/><rect x="534" y="5" width="1" height="2" fill="#3c3c3c"/><rect x="543" y="4" width="1" height="5" fill="#3c3c3c"/><rect x="553" y="5" width="1" height="2" fill="#3c3c3c"/><rect x="572" y="5" width="1" height="2" fill="#3c3c3c"/><rect x="581" y="4" width="1" height="5" fill="#3c3c3c"/><rect x="590" y="5" width="1" height="2" fill="#3c3c3c"/><rect x="609" y="5" width="1" height="2" fill="#3c3c3c"/><rect x="619" y="4" width="1" height="5" fill="#3c3c3c"/><rect x="628" y="5" width="1" height="2" fill="#3c3c3c"/><rect x="647" y="5" width="1" height="2" fill="#3c3c3c"/><rect x="657" y="4" width="1" height="5" fill="#3c3c3c"/><rect x="666" y="5" width="1" height="2" fill="#3c3c3c"/><rect x="685" y="5" width="1" height="2" fill="#3c3c3c"/><rect x="694" y="4" width="1" height="5" fill="#3c3c3c"/><rect x="704" y="5" width="1" height="2" fill="#3c3c3c"/><rect x="723" y="5" width="1" height="2" fill="#3c3c3c"/><rect x="732" y="4" width="1" height="5" fill="#3c3c3c"/><rect x="742" y="5" width="1" height="2" fill="#3c3c3c"/><rect x="761" y="5" width="1" height="2" fill="#3c3c3c"/><rect x="770" y="4" width="1" height="5" fill="#3c3c3c"/><rect x="779" y="5" width="1" height="2" fill="#3c3c3c"/></svg>
<svg class="r" style="left:391px;top:179px;" width="8" height="8" viewBox="0 0 8 8"><path d="M2.300 1V6h5" fill="none" stroke="#666" stroke-width="1.600"/></svg>
<svg class="r" style="left:179.5px;top:169.5px;" width="10" height="22" viewBox="0 0 10 22"><path d="M0.800 0.800h8.200v1.600L4.900 6.800 0.800 2.400z" fill="#fff" stroke="#858585" stroke-width="0.900"/><path d="M4.900 6.800l4.100 4.200v1.800H0.800V11z" fill="#fff" stroke="#858585" stroke-width="0.900"/><rect x="0.800" y="14" width="8.200" height="6.800" fill="#fff" stroke="#858585" stroke-width="0.900"/></svg>
<div class="r" style="left:22px;top:207px;width:11px;height:78px;background:#c8c8c8;"></div>
<div class="r" style="left:22px;top:285px;width:11px;height:324px;background:#fff;"></div>
<span class="t" style="left:23.5px;top:203.5px;width:11px;height:11px;font-size:9.9px;line-height:11px;text-align:center;color:#3c3c3c;transform:rotate(-90deg);">2</span>
<span class="t" style="left:23.5px;top:241.3px;width:11px;height:11px;font-size:9.9px;line-height:11px;text-align:center;color:#3c3c3c;transform:rotate(-90deg);">1</span>
<span class="t" style="left:23.5px;top:316.9px;width:11px;height:11px;font-size:9.9px;line-height:11px;text-align:center;color:#3c3c3c;transform:rotate(-90deg);">1</span>
<span class="t" style="left:23.5px;top:354.7px;width:11px;height:11px;font-size:9.9px;line-height:11px;text-align:center;color:#3c3c3c;transform:rotate(-90deg);">2</span>
<span class="t" style="left:23.5px;top:392.5px;width:11px;height:11px;font-size:9.9px;line-height:11px;text-align:center;color:#3c3c3c;transform:rotate(-90deg);">3</span>
<span class="t" style="left:23.5px;top:430.3px;width:11px;height:11px;font-size:9.9px;line-height:11px;text-align:center;color:#3c3c3c;transform:rotate(-90deg);">4</span>
<span class="t" style="left:23.5px;top:468.1px;width:11px;height:11px;font-size:9.9px;line-height:11px;text-align:center;color:#3c3c3c;transform:rotate(-90deg);">5</span>
<span class="t" style="left:23.5px;top:505.9px;width:11px;height:11px;font-size:9.9px;line-height:11px;text-align:center;color:#3c3c3c;transform:rotate(-90deg);">6</span>
<span class="t" style="left:23.5px;top:543.7px;width:11px;height:11px;font-size:9.9px;line-height:11px;text-align:center;color:#3c3c3c;transform:rotate(-90deg);">7</span>
<span class="t" style="left:23.5px;top:581.5px;width:11px;height:11px;font-size:9.9px;line-height:11px;text-align:center;color:#3c3c3c;transform:rotate(-90deg);">8</span>
<svg class="r" style="left:22px;top:207px;" width="11" height="402" viewBox="0 0 11 402"><rect x="6" y="11" width="2" height="1" fill="#3c3c3c"/><rect x="5" y="20" width="5" height="1" fill="#3c3c3c"/><rect x="6" y="30" width="2" height="1" fill="#3c3c3c"/><rect x="6" y="49" width="2" height="1" fill="#3c3c3c"/><rect x="5" y="58" width="5" height="1" fill="#3c3c3c"/><rect x="6" y="68" width="2" height="1" fill="#3c3c3c"/><rect x="6" y="87" width="2" height="1" fill="#3c3c3c"/><rect x="5" y="96" width="5" height="1" fill="#3c3c3c"/><rect x="6" y="105" width="2" height="1" fill="#3c3c3c"/><rect x="6" y="124" width="2" height="1" fill="#3c3c3c"/><rect x="5" y="134" width="5" height="1" fill="#3c3c3c"/><rect x="6" y="143" width="2" height="1" fill="#3c3c3c"/><rect x="6" y="162" width="2" height="1" fill="#3c3c3c"/><rect x="5" y="172" width="5" height="1" fill="#3c3c3c"/><rect x="6" y="181" width="2" height="1" fill="#3c3c3c"/><rect x="6" y="200" width="2" height="1" fill="#3c3c3c"/><rect x="5" y="209" width="5" height="1" fill="#3c3c3c"/><rect x="6" y="219" width="2" height="1" fill="#3c3c3c"/><rect x="6" y="238" width="2" height="1" fill="#3c3c3c"/><rect x="5" y="247" width="5" height="1" fill="#3c3c3c"/><rect x="6" y="257" width="2" height="1" fill="#3c3c3c"/><rect x="6" y="276" width="2" height="1" fill="#3c3c3c"/><rect x="5" y="285" width="5" height="1" fill="#3c3c3c"/><rect x="6" y="294" width="2" height="1" fill="#3c3c3c"/><rect x="6" y="313" width="2" height="1" fill="#3c3c3c"/><rect x="5" y="323" width="5" height="1" fill="#3c3c3c"/><rect x="6" y="332" width="2" height="1" fill="#3c3c3c"/><rect x="6" y="351" width="2" height="1" fill="#3c3c3c"/><rect x="5" y="361" width="5" height="1" fill="#3c3c3c"/><rect x="6" y="370" width="2" height="1" fill="#3c3c3c"/><rect x="6" y="389" width="2" height="1" fill="#3c3c3c"/><rect x="5" y="398" width="5" height="1" fill="#3c3c3c"/></svg>
<div class="r" style="left:72px;top:209px;width:793px;height:400px;background:#fff;border:1px solid #c8c8c8;border-bottom:0;box-sizing:border-box;"></div>
<div class="r" style="left:185px;top:285px;width:57px;height:29.5px;background:#c8c8c8;"></div>
<span class="t" style='left:185.0px;top:288.1px;font-size:14px;color:#000;letter-spacing:-0.52px;'>Lumpics</span>
<svg class="r" style="left:185px;top:301px;" width="50" height="4" viewBox="0 0 50 4"><path d="M0 2 L1 0.6 L3 3.2 L5 0.6 L7 3.2 L9 0.6 L11 3.2 L13 0.6 L15 3.2 L17 0.6 L19 3.2 L21 0.6 L23 3.2 L25 0.6 L27 3.2 L29 0.6 L31 3.2 L33 0.6 L35 3.2 L37 0.6 L39 3.2 L41 0.6 L43 3.2 L45 0.6 L47 3.2 L49 0.6" fill="none" stroke="#e03030" stroke-width="0.9"/></svg>
<!-- status bar -->
<div class="r" style="left:17px;top:609px;width:897px;height:21px;background:#f3f3f3;border-top:1px solid #c9c9c9;box-sizing:border-box;"></div>
<span class="t" style='left:24.7px;top:614.3px;font-size:12px;color:#444444;letter-spacing:-0.43px;'>Страница 1 из 1</span>
<span class="t" style='left:128.0px;top:614.3px;font-size:12px;color:#444444;letter-spacing:-0.46px;'>Слово 1 из 1</span>
<svg class="r" style="left:218px;top:612px;" width="18" height="16" viewBox="0 0 18 16"><path d="M1 2.500h5l1.500 1.400v10.600l-1.500-1.300H1z" fill="none" stroke="#666" stroke-width="1"/><path d="M7.500 3.900L9 2.500h1.800M7.500 14.500L9 13.200h1.800" fill="none" stroke="#666" stroke-width="1"/><path d="M11 4l4.500 5.500M15.500 4L11 9.500" stroke="#555" stroke-width="1.200"/><path d="M10.500 11.500h5.500" stroke="#555" stroke-width="1"/></svg>
<span class="t" style='left:250.8px;top:614.3px;font-size:12px;color:#444444;letter-spacing:-0.37px;'>английский (США)</span>
<svg class="r" style="left:622.5px;top:613px;" width="14" height="14" viewBox="0 0 14 14"><path d="M0.500 0.500h5.700v10.500h-5.700zM7.800 0.500h5.700v10.500h-5.700z" fill="none" stroke="#6a6a6a" stroke-width="1"/><path d="M7 0v12.500M5.500 11.500L7 13l1.500-1.500" fill="none" stroke="#6a6a6a" stroke-width="1"/><path d="M2 2.5h3M9 2.5h3" stroke="#6a6a6a" stroke-width="0.900"/><path d="M2 4.5h3M9 4.5h3" stroke="#6a6a6a" stroke-width="0.900"/><path d="M2 6.5h3M9 6.5h3" stroke="#6a6a6a" stroke-width="0.900"/><path d="M2 8.5h3M9 8.5h3" stroke="#6a6a6a" stroke-width="0.900"/></svg>
<div class="r" style="left:649px;top:610px;width:38px;height:20px;background:#c6c6c6;"></div>
<svg class="r" style="left:661px;top:613px;" width="14" height="14" viewBox="0 0 14 14"><rect x="0.500" y="0.500" width="13" height="12.500" fill="none" stroke="#555" stroke-width="1.100"/><path d="M2.500 3.5h9" stroke="#555" stroke-width="1"/><path d="M2.500 5.5h9" stroke="#555" stroke-width="1"/><path d="M2.500 7.5h9" stroke="#555" stroke-width="1"/><path d="M2.500 9.5h9" stroke="#555" stroke-width="1"/><path d="M2.500 11.5h9" stroke="#555" stroke-width="1"/></svg>
<svg class="r" style="left:698.5px;top:612.5px;" width="16" height="16" viewBox="0 0 16 16"><path d="M11.500 6V0.500h-11v10h6" fill="none" stroke="#6a6a6a" stroke-width="1"/><path d="M2.500 3h7M2.500 5.500h7M2.500 8h4" stroke="#6a6a6a" stroke-width="0.900"/><circle cx="10.800" cy="10" r="4" fill="#666" stroke="#555" stroke-width="0.600"/><path d="M8.500 8.500c1 .2 1.500 1 1 2s.5 1.500 1 1.500M11.500 7c0 1 1 1.500 2 1.500" fill="none" stroke="#f1f1f1" stroke-width="1.100"/></svg>
<div class="r" style="left:730px;top:619px;width:6px;height:2px;background:#555;"></div>
<div class="r" style="left:740px;top:619.5px;width:100px;height:1px;background:#8a8a8a;"></div>
<div class="r" style="left:788px;top:614px;width:4px;height:12px;background:#555;"></div>
<div class="r" style="left:844px;top:619px;width:8px;height:2px;background:#555;"></div>
<div class="r" style="left:847px;top:616px;width:2px;height:8px;background:#555;"></div>
<span class="t" style='left:867.0px;top:614.3px;font-size:12px;color:#444444;letter-spacing:-1.47px;'>100%</span>
<!-- editing dropdown -->
<div class="r" style="left:786px;top:166px;width:98px;height:72px;background:#fff;border:1px solid #c6c6c6;box-sizing:border-box;box-shadow:1px 2px 4px rgba(0,0,0,.25);"></div>
<svg class="r" style="left:793px;top:172px;" width="15" height="14" viewBox="0 0 15 14"><circle cx="9.3" cy="5.5" r="3.9" fill="none" stroke="#3b73b9" stroke-width="1.8"/><path d="M6.500 8.500L1.300 13.200" stroke="#3b73b9" stroke-width="2.400"/></svg>
<span class="t" style='left:812.3px;top:174.2px;font-size:12px;color:#444444;letter-spacing:-0.26px;'>Найти</span>
<svg class="r" style="left:855.1px;top:178px;" width="7" height="4" viewBox="0 0 7 4"><path d="M0.5 0.5h6L3.5 3.7z" fill="#777"/></svg>
<svg class="r" style="left:792px;top:194px;" width="18" height="15" viewBox="0 0 18 15"><text x="0.500" y="8" font-family="Liberation Sans, sans-serif" font-size="10" fill="#555">a</text><text x="6.300" y="8" font-family="Liberation Sans, sans-serif" font-size="10" fill="#8e4a9e">b</text><text x="6" y="15.500" font-family="Liberation Sans, sans-serif" font-size="10" fill="#3b73b9">ac</text><path d="M2.500 10v3.500M1 12l1.500 1.800L4 12" fill="none" stroke="#3b73b9" stroke-width="0.9"/></svg>
<span class="t" style='left:812.3px;top:197.2px;font-size:12px;color:#444444;letter-spacing:-0.23px;'>Заменить</span>
<div class="r" style="left:790px;top:214px;width:90px;height:23.2px;background:#c6c6c6;"></div>
<svg class="r" style="left:796.5px;top:216.5px;" width="12" height="17" viewBox="0 0 12 17"><path d="M0.600 0.600V13l3-2.800 2.200 5 1.800-0.800-2.200-4.900h4.100z" fill="#fff" stroke="#555" stroke-width="1" stroke-linejoin="round"/></svg>
<span class="t" style='left:812.3px;top:220.2px;font-size:12px;color:#444444;letter-spacing:-0.38px;'>Выделить</span>
<svg class="r" style="left:867.0px;top:222.8px;" width="7" height="4" viewBox="0 0 7 4"><path d="M0.5 0.5h6L3.5 3.7z" fill="#444"/></svg>
<!-- select menu -->
<div class="r" style="left:419px;top:237px;width:496px;height:100px;background:#fff;border:1px solid #c6c6c6;box-sizing:border-box;box-shadow:2px 2px 5px rgba(0,0,0,.3);"></div>
<span class="t" style='left:452.5px;top:245.3px;font-size:12px;color:#444444;letter-spacing:-0.38px;'>Выделит<u>ь</u> все</span>
<span class="t" style='left:452.5px;top:269.3px;font-size:12px;color:#444444;letter-spacing:-0.10px;'>Выбор объек<u>т</u>ов</span>
<span class="t" style='left:452.5px;top:292.6px;font-size:12px;color:#444444;letter-spacing:-0.12px;'><u>В</u>ыделить все фрагменты текста с одинаковым форматированием (нет данных)</span>
<span class="t" style='left:452.5px;top:316.8px;font-size:12px;color:#444444;letter-spacing:-0.26px;'>О<u>б</u>ласть выделения...</span>
<svg class="r" style="left:425px;top:243.3px;" width="17" height="17" viewBox="0 0 17 17"><path d="M1 1h12.500v6M1 1v9h5" fill="none" stroke="#3b73b9" stroke-width="1" stroke-dasharray="2 1.300"/><path d="M3 4h5M3 6.500h4" stroke="#777" stroke-width="0.9"/><g transform="translate(8.500,5.500) scale(0.68)"><path d="M0.600 0.600V13l3-2.800 2.200 5 1.800-0.800-2.200-4.900h4.100z" fill="#fff" stroke="#444" stroke-width="1.300" stroke-linejoin="round"/></g></svg>
<svg class="r" style="left:427.5px;top:270.5px;" width="12" height="16" viewBox="0 0 12 16"><g transform="scale(0.82)"><path d="M0.600 0.600V13l3-2.800 2.200 5 1.800-0.800-2.200-4.900h4.100z" fill="#fff" stroke="#555" stroke-width="1.200" stroke-linejoin="round"/></g></svg>
<svg class="r" style="left:425px;top:315.3px;" width="17" height="18" viewBox="0 0 17 18"><rect x="1" y="1" width="5.500" height="5.500" fill="none" stroke="#666" stroke-width="1"/><rect x="1" y="10" width="5.500" height="5.500" fill="none" stroke="#666" stroke-width="1"/><path d="M3.700 6.500v3.500" stroke="#666" stroke-width="1"/><path d="M6.500 2.500h6v5" fill="none" stroke="#eaa53a" stroke-width="2.200"/><g transform="translate(8,5.500) scale(0.7)"><path d="M0.600 0.600V13l3-2.800 2.200 5 1.800-0.800-2.200-4.900h4.100z" fill="#fff" stroke="#444" stroke-width="1.300" stroke-linejoin="round"/></g></svg>
<!-- annotations -->
<svg class="r" style="left:46.6px;top:20.3px;filter:drop-shadow(1.5px 2px 2px rgba(0,0,0,.5));" width="135.9" height="78.3"><rect x="16.20" y="16.20" width="103.50" height="45.90" rx="8.30" fill="none" stroke="#ff0000" stroke-width="4.4"/></svg>
<svg class="r" style="left:763.4px;top:57.3px;filter:drop-shadow(1.5px 2px 2px rgba(0,0,0,.5));" width="139.4" height="107.3"><rect x="16.20" y="16.20" width="107.00" height="74.90" rx="8.30" fill="none" stroke="#ff0000" stroke-width="4.4"/></svg>
<svg class="r" style="left:766.6px;top:192.3px;filter:drop-shadow(1.5px 2px 2px rgba(0,0,0,.5));" width="138.1" height="67.3"><rect x="16.20" y="16.20" width="105.70" height="34.90" rx="8.30" fill="none" stroke="#ff0000" stroke-width="4.4"/></svg>
<svg class="r" style="left:396.4px;top:216.3px;filter:drop-shadow(1.5px 2px 2px rgba(0,0,0,.5));" width="165.4" height="68.0"><rect x="16.20" y="16.20" width="133.00" height="35.60" rx="8.30" fill="none" stroke="#ff0000" stroke-width="4.4"/></svg>
<div class="r badge" style="left:158.4px;top:14.1px;width:46.6px;height:46.6px;"></div><svg class="r" style="left:157.7px;top:13.4px;overflow:visible" width="48" height="48" viewBox="0 0 48 48"><g font-family="NanumGothic, Liberation Sans, sans-serif" font-weight="800" font-size="25.6" text-anchor="middle" stroke-linejoin="round"><text x="23.6" y="33.2" fill="#000" stroke="#000" stroke-width="4.3">1</text><text x="23.6" y="33.2" fill="#fff" stroke="#fff" stroke-width="1.5">1</text></g></svg>
<div class="r badge" style="left:870.6px;top:43.3px;width:46.6px;height:46.6px;"></div><svg class="r" style="left:869.9px;top:42.6px;overflow:visible" width="48" height="48" viewBox="0 0 48 48"><g font-family="NanumGothic, Liberation Sans, sans-serif" font-weight="800" font-size="25.6" text-anchor="middle" stroke-linejoin="round"><text x="23.6" y="33.2" fill="#000" stroke="#000" stroke-width="4.3">2</text><text x="23.6" y="33.2" fill="#fff" stroke="#fff" stroke-width="1.5">2</text></g></svg>
<div class="r badge" style="left:869.5px;top:172.2px;width:46.6px;height:46.6px;"></div><svg class="r" style="left:868.8px;top:171.5px;overflow:visible" width="48" height="48" viewBox="0 0 48 48"><g font-family="NanumGothic, Liberation Sans, sans-serif" font-weight="800" font-size="25.6" text-anchor="middle" stroke-linejoin="round"><text x="23.6" y="33.2" fill="#000" stroke="#000" stroke-width="4.3">3</text><text x="23.6" y="33.2" fill="#fff" stroke="#fff" stroke-width="1.5">3</text></g></svg>
<div class="r badge" style="left:530.4px;top:200.2px;width:46.6px;height:46.6px;"></div><svg class="r" style="left:529.7px;top:199.5px;overflow:visible" width="48" height="48" viewBox="0 0 48 48"><g font-family="NanumGothic, Liberation Sans, sans-serif" font-weight="800" font-size="25.6" text-anchor="middle" stroke-linejoin="round"><text x="23.6" y="33.2" fill="#000" stroke="#000" stroke-width="4.3">4</text><text x="23.6" y="33.2" fill="#fff" stroke="#fff" stroke-width="1.5">4</text></g></svg>
</div>
</body>
</html>
